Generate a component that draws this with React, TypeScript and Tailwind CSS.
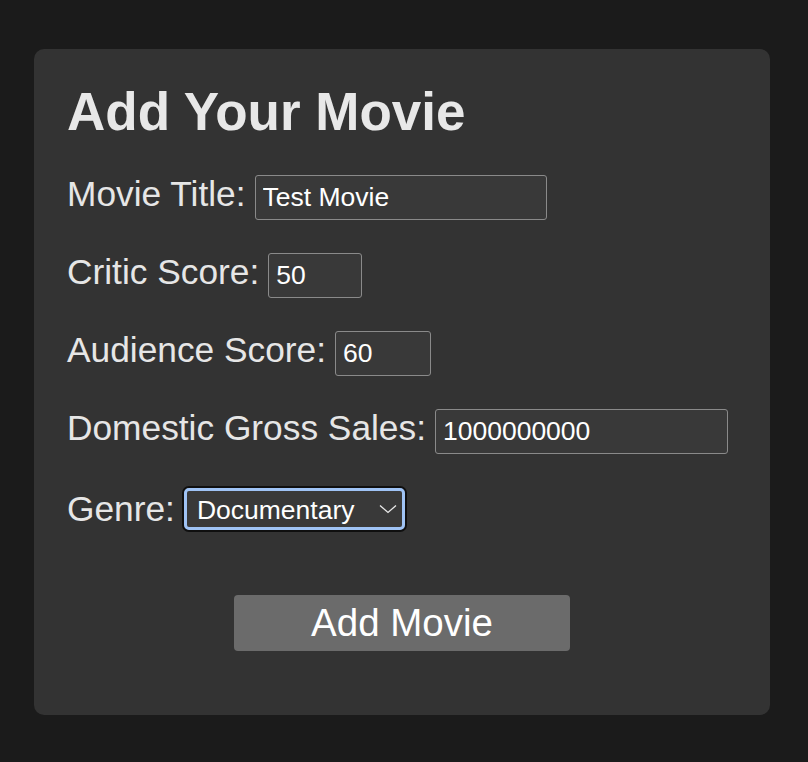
import { useState } from 'react';

const font = { fontFamily: '"Liberation Sans", Arial, Helvetica, sans-serif' };

export default function App() {
  const [title, setTitle] = useState('Test Movie');
  const [critic, setCritic] = useState('50');
  const [audience, setAudience] = useState('60');
  const [gross, setGross] = useState('1000000000');
  const [genre, setGenre] = useState('Documentary');

  const inputCls =
    'h-[45px] rounded-[3px] border border-[#8a8a8a] bg-[#393939] px-[7px] text-[26.5px] text-white outline-none';

  return (
    <div className="min-h-screen bg-[#1b1b1b] pt-[49px] pl-[34px] pb-[47px]" style={font}>
      <div className="w-[736px] rounded-[10px] bg-[#333333] px-[33px] pt-[33px] pb-[64px]">
        <h1 className="text-[53px] font-bold leading-[1.15] text-[#e8e8e8]">Add Your Movie</h1>

        <div className="mt-[31px] flex flex-col gap-[32px]">
          <div className="flex items-baseline gap-[9px]">
            <label className="text-[35.3px] leading-[1.15] text-[#e6e6e6]">Movie Title:</label>
            <input className={`${inputCls} w-[292px]`} value={title} onChange={(e) => setTitle(e.target.value)} />
          </div>
          <div className="flex items-baseline gap-[9px]">
            <label className="text-[35.3px] leading-[1.15] text-[#e6e6e6]">Critic Score:</label>
            <input className={`${inputCls} w-[94px]`} value={critic} onChange={(e) => setCritic(e.target.value)} />
          </div>
          <div className="flex items-baseline gap-[9px]">
            <label className="text-[35.3px] leading-[1.15] text-[#e6e6e6]">Audience Score:</label>
            <input className={`${inputCls} w-[96px]`} value={audience} onChange={(e) => setAudience(e.target.value)} />
          </div>
          <div className="flex items-baseline gap-[9px]">
            <label className="text-[35.3px] leading-[1.15] text-[#e6e6e6]">Domestic Gross Sales:</label>
            <input className={`${inputCls} w-[293px]`} value={gross} onChange={(e) => setGross(e.target.value)} />
          </div>
          <div className="flex items-center gap-[7px]">
            <label className="text-[35.3px] leading-[1.15] text-[#e6e6e6]">Genre:</label>
            <div className="relative rounded-[7px] border-2 border-[#0f0f0f]">
              <select
                className="block h-[42px] w-[221px] appearance-none rounded-[5px] border-[3px] border-[#9fc3f5] bg-[#393939] pl-[10px] pr-[30px] text-[26.5px] text-white outline-none"
                value={genre}
                onChange={(e) => setGenre(e.target.value)}
              >
                <option>Action</option>
                <option>Comedy</option>
                <option>Documentary</option>
                <option>Drama</option>
                <option>Horror</option>
              </select>
              <svg
                className="pointer-events-none absolute right-[8px] top-[16px]"
                width="18"
                height="10"
                viewBox="0 0 18 10"
                fill="none"
              >
                <path d="M1 1.5l8 7 8-7" stroke="#e8e8e8" strokeWidth="1.3" />
              </svg>
            </div>
          </div>
        </div>

        <div className="mt-[63px] flex justify-center">
          <button className="h-[56px] w-[336px] rounded-[4px] bg-[#6b6b6b] text-[38.5px] leading-none text-white">
            Add Movie
          </button>
        </div>
      </div>
    </div>
  );
}
